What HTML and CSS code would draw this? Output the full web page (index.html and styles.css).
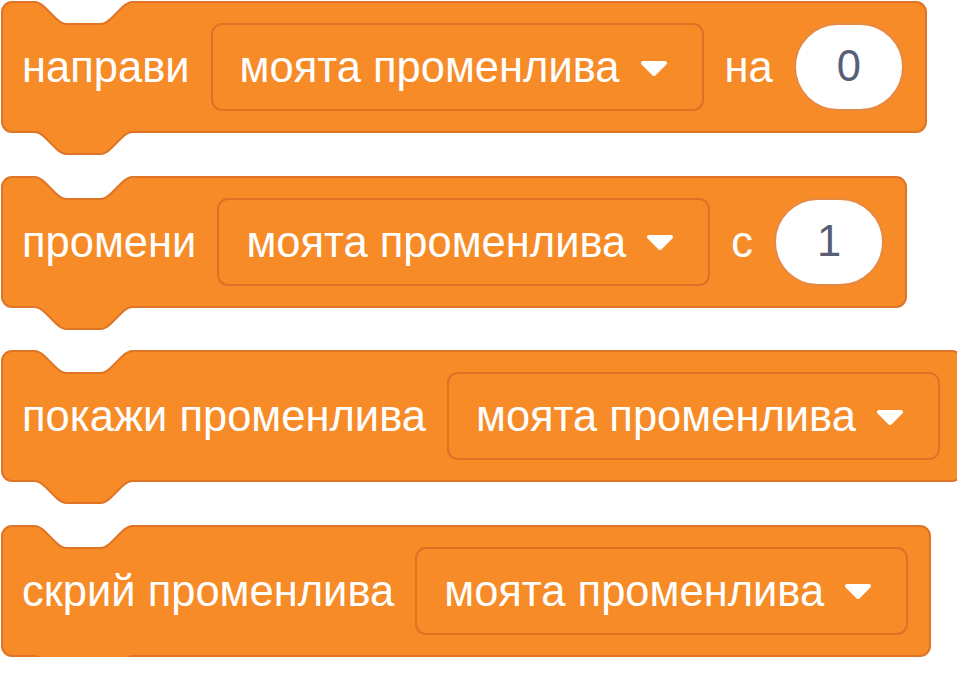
FILE: index.html
```html
<!DOCTYPE html>
<html>
<head>
    <title>Променливи</title>
    <link rel="stylesheet" href="styles.css">
</head>
<body>
    <svg class="defs" aria-hidden="true">
        <defs>
            <path id="notch-area" d="M0,-1 V1 c5.5,0 8.25,2.75 11,5.5 l11,11 c2.75,2.75 5.5,5.5 11,5.5 h33 c5.5,0 8.25,-2.75 11,-5.5 l11,-11 c2.75,-2.75 5.5,-5.5 11,-5.5 V-1 Z"/>
            <path id="notch-line" d="M0,1 c5.5,0 8.25,2.75 11,5.5 l11,11 c2.75,2.75 5.5,5.5 11,5.5 h33 c5.5,0 8.25,-2.75 11,-5.5 l11,-11 c2.75,-2.75 5.5,-5.5 11,-5.5"/>
            <path id="arrow" d="M3,3 H25 L14,14 Z"/>
        </defs>
    </svg>

    <div class="script">
        <div class="block">
            <svg class="notch"><use href="#notch-area" class="area"/><use href="#notch-line" class="line"/></svg>
            <span class="label">направи</span>
            <span class="dropdown">моята променлива <svg class="arrow" viewBox="0 0 28 17"><use href="#arrow"/></svg></span>
            <span class="label">на</span>
            <span class="number">0</span>
            <svg class="tab"><use href="#notch-area" class="area"/><use href="#notch-line" class="line"/></svg>
        </div>

        <div class="block">
            <svg class="notch"><use href="#notch-area" class="area"/><use href="#notch-line" class="line"/></svg>
            <span class="label">промени</span>
            <span class="dropdown">моята променлива <svg class="arrow" viewBox="0 0 28 17"><use href="#arrow"/></svg></span>
            <span class="label">с</span>
            <span class="number">1</span>
            <svg class="tab"><use href="#notch-area" class="area"/><use href="#notch-line" class="line"/></svg>
        </div>

        <div class="block">
            <svg class="notch"><use href="#notch-area" class="area"/><use href="#notch-line" class="line"/></svg>
            <span class="label">покажи променлива</span>
            <span class="dropdown">моята променлива <svg class="arrow" viewBox="0 0 28 17"><use href="#arrow"/></svg></span>
            <svg class="tab"><use href="#notch-area" class="area"/><use href="#notch-line" class="line"/></svg>
        </div>

        <div class="block">
            <svg class="notch"><use href="#notch-area" class="area"/><use href="#notch-line" class="line"/></svg>
            <span class="label">скрий променлива</span>
            <span class="dropdown">моята променлива <svg class="arrow" viewBox="0 0 28 17"><use href="#arrow"/></svg></span>
            <svg class="tab"><use href="#notch-area" class="area"/><use href="#notch-line" class="line"/></svg>
        </div>
    </div>
</body>
</html>
```

FILE: styles.css
```css
body {
    font-family: "Liberation Sans", Arial, sans-serif;
    background-color: white;
    margin: 0;
    padding: 1px 0 0 1px;
}
.defs {
    position: absolute;
    width: 0;
    height: 0;
}
.script {
    display: flex;
    flex-direction: column;
    align-items: flex-start;
    gap: 42.5px;
}
.block {
    position: relative;
    display: flex;
    align-items: center;
    gap: 21px;
    box-sizing: border-box;
    height: 132px;
    padding: 0 21px 0 19px;
    background-color: #f68b28;
    border: 2px solid #de7426;
    border-radius: 11px;
    color: white;
    font-size: 43.5px;
    line-height: 1;
    white-space: nowrap;
}
.label {
    padding-top: 2px;
}
.notch, .tab {
    position: absolute;
    left: 31px;
    width: 99px;
    height: 26px;
    overflow: visible;
    stroke-width: 2px;
}
.notch {
    top: -2px;
}
.tab {
    top: 100%;
}
.notch .area {
    fill: white;
}
.tab .area {
    fill: #f68b28;
}
.line {
    fill: none;
    stroke: #de7426;
}
.dropdown {
    display: flex;
    align-items: center;
    gap: 20px;
    box-sizing: border-box;
    height: 88px;
    padding: 2px 34px 0 27px;
    border: 2px solid #dc7226;
    border-radius: 11px;
}
.arrow {
    width: 28px;
    height: 17px;
    fill: white;
    stroke: white;
    stroke-width: 4px;
    stroke-linejoin: round;
}
.number {
    display: flex;
    align-items: center;
    justify-content: center;
    box-sizing: border-box;
    width: 110px;
    height: 88px;
    background-color: white;
    border: 2px solid #e58a45;
    border-radius: 44px;
    color: #575e75;
}
```
